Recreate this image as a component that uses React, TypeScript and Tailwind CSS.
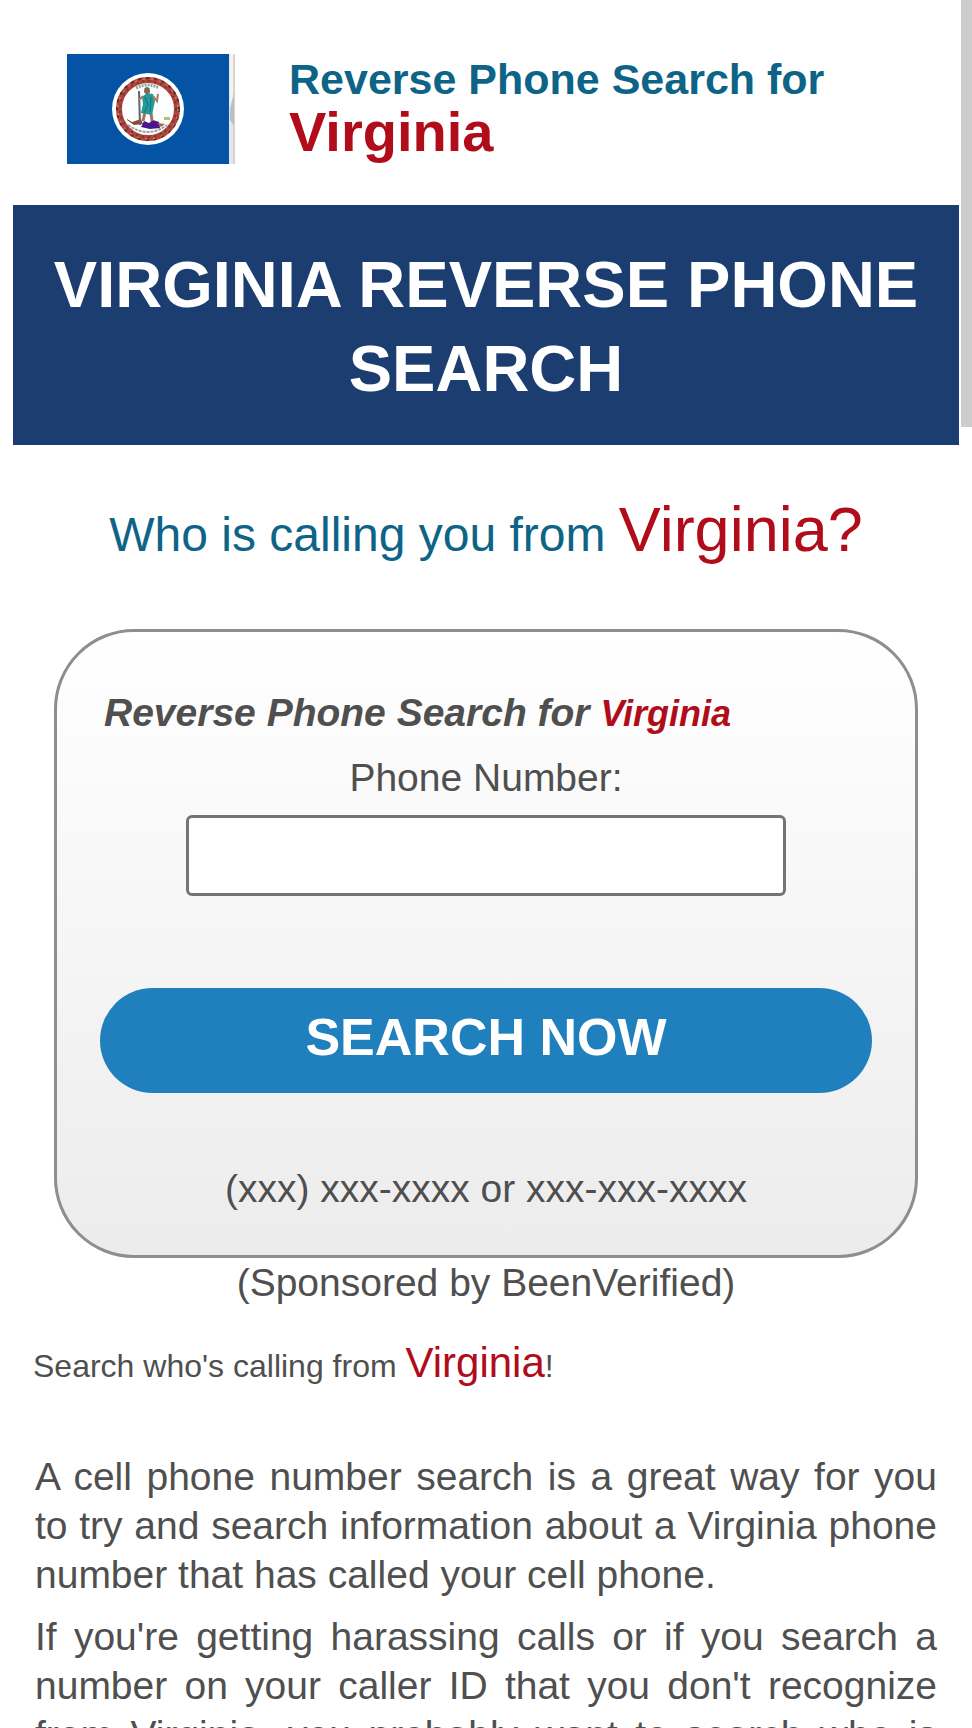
import { useState } from "react";

const STATE_NAME = "Virginia";

const VirginiaFlag = () => (
  <svg viewBox="0 0 168 110" className="w-[168px] h-[110px] shrink-0" role="img" aria-label="Virginia flag">
    <rect width="168" height="110" fill="#e4e6ea" />
    <rect width="162" height="110" fill="#0553a4" />
    <path d="M163 0h4v36l-4 18z" fill="#f6f2f2" />
    <path d="M163 54l4-14v32l-4-6z" fill="#b9c0cc" />
    <path d="M167 0v110" stroke="#bfc4b4" strokeWidth="1" />
    <circle cx="81" cy="55" r="36" fill="#fdfefe" />
    <circle cx="81" cy="55" r="29" fill="none" stroke="#b5403c" strokeWidth="6" />
    <circle cx="81" cy="55" r="31" fill="none" stroke="#4c3a24" strokeWidth="2" strokeDasharray="3 5" />
    <circle cx="81" cy="55" r="28" fill="none" stroke="#6d3a35" strokeWidth="2" strokeDasharray="2 4" />
    <circle cx="81" cy="55" r="30" fill="none" stroke="#e09a8a" strokeWidth="1" strokeDasharray="2 6" />
    {/* motto arcs */}
    <path d="M69 34q12-6 23 0" fill="none" stroke="#93a593" strokeWidth="3" strokeDasharray="2 1" />
    <path d="M61 71q20 14 39 0" fill="none" stroke="#9aa3a0" strokeWidth="2" strokeDasharray="3 1" />
    {/* fallen figure */}
    <path d="M60 65l5 3 9-3 2 5-9 1-7-5z" fill="#8c4a38" />
    <path d="M74 73l3-6 5 2 4-3 6 2 1 6-10 1z" fill="#4b168f" />
    <path d="M90 69l8 1-4 3z" fill="#9b6a3c" />
    <path d="M97 63h6v3h-6z" fill="#b9bd72" />
    {/* standing figure */}
    <path d="M72 37l1 34" stroke="#5d6470" strokeWidth="2" />
    <path d="M78 58l-2 9M84 59l1 8" stroke="#b06f54" strokeWidth="3" />
    <path d="M75 43l5-4 6 1 2 7-3 14-11-2 2-9z" fill="#229c9b" />
    <path d="M78 43l3 8-4 8M84 43l-1 15" stroke="#16747c" strokeWidth="1" fill="none" />
    <path d="M76 42l-4 4M86 42l4 5 1-7" stroke="#b5775b" strokeWidth="2" fill="none" />
    <circle cx="80" cy="37" r="3" fill="#8f6049" />
    <path d="M77 35q3-4 6 0z" fill="#3b7f72" />
  </svg>
);

const SearchForm = () => {
  const [phone, setPhone] = useState("");

  const handleSubmit = (e: React.FormEvent) => {
    e.preventDefault();
  };

  return (
    <form
      onSubmit={handleSubmit}
      className="mx-[41px] mt-[58px] px-[43px] pt-14 pb-[42px] flex flex-col items-center border-3 border-[#8e8e8e] rounded-[80px] bg-linear-to-b from-white to-[#ececec]"
    >
      <h3 className="w-full px-1 font-bold italic">
        Reverse Phone Search for <span className="text-[36px] text-[#b00c1a]">{STATE_NAME}</span>
      </h3>
      <label htmlFor="phone" className="mt-[15px]">
        Phone Number:
      </label>
      <input
        id="phone"
        type="text"
        value={phone}
        onChange={(e) => setPhone(e.target.value)}
        className="mt-[13px] w-[600px] max-w-full h-[81px] px-4 bg-white border-3 border-[#747474] rounded-md"
      />
      <button
        type="submit"
        className="mt-[92px] w-full h-[105px] pb-1.5 rounded-full bg-[#207fbd] text-[52px] font-bold text-white"
      >
        SEARCH NOW
      </button>
      <p className="mt-[71px]">(xxx) xxx-xxxx or xxx-xxx-xxxx</p>
    </form>
  );
};

const App = () => {
  return (
    <div className="relative h-screen overflow-hidden bg-white px-[13px] pt-[54px] font-['Liberation_Sans',Arial,sans-serif] text-[39px] leading-[49px] text-[#4f4f4f]">
      <header className="flex gap-[54px] pl-[54px]">
        <VirginiaFlag />
        <div className="font-bold">
          <p className="text-[43px] leading-[50px] text-[#0d6487]">Reverse Phone Search for</p>
          <p className="text-[56px] leading-[56px] text-[#b00c1a]">{STATE_NAME}</p>
        </div>
      </header>

      <h1 className="mt-[41px] px-4 pt-[38px] pb-[34px] bg-[#1b3d6f] text-center text-[65px] leading-[84px] font-bold text-white">
        VIRGINIA REVERSE PHONE SEARCH
      </h1>

      <h2 className="mt-12 text-center text-[48px] leading-[72px] text-[#0d6487]">
        Who is calling you from <span className="text-[63px] text-[#b00c1a]">{STATE_NAME}?</span>
      </h2>

      <SearchForm />
      <p className="text-center">(Sponsored by BeenVerified)</p>

      <p className="mt-[31px] px-5 text-[32px]">
        Search who's calling from <span className="text-[42px] text-[#b00c1a]">{STATE_NAME}</span>!
      </p>

      <div className="mt-[61px] px-[22px] flex flex-col gap-[13px] text-justify">
        <p>
          A cell phone number search is a great way for you to try and search information about a{" "}
          {STATE_NAME} phone number that has called your cell phone.
        </p>
        <p>
          If you're getting harassing calls or if you search a number on your caller ID that you
          don't recognize from {STATE_NAME}, you probably want to search who is calling you.
        </p>
      </div>

      {/* scroll thumb */}
      <div className="absolute top-0 right-0 w-[11px] h-[427px] bg-[#cdcdcd]" />
    </div>
  );
};

export default App;
